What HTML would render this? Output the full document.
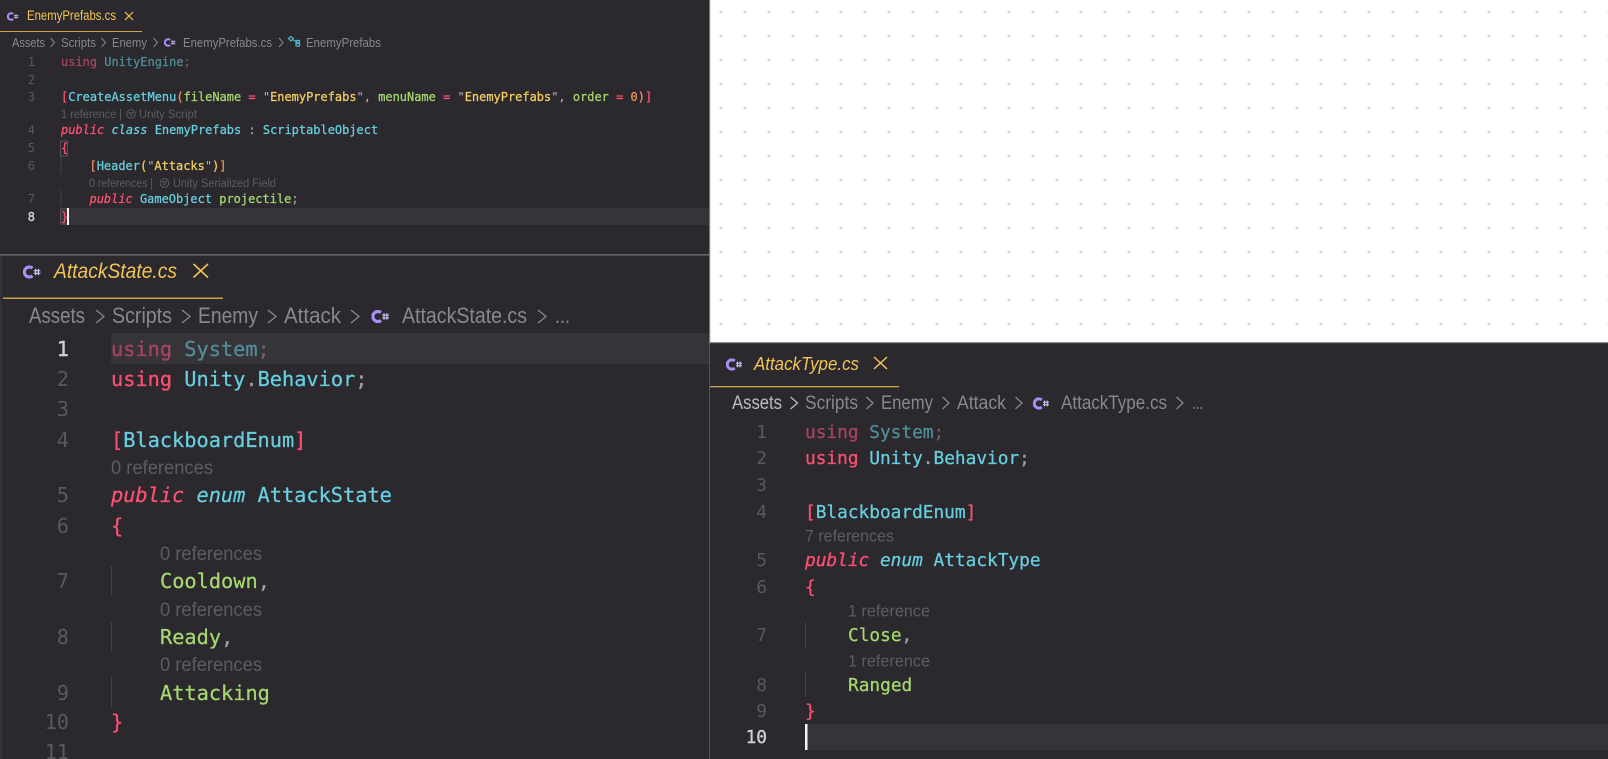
<!DOCTYPE html>
<html><head><meta charset="utf-8"><style>
html,body{margin:0;padding:0;background:#2b292d;overflow:hidden;width:1608px;height:759px}
svg{display:block}
text{white-space:pre}
.m{font-family:"DejaVu Sans Mono","Liberation Mono",monospace}
.u{font-family:"Liberation Sans",sans-serif}
.s1{font-size:11.97px}.s2{font-size:20.3px}.s3{font-size:17.8px}
.n{fill:#5b595c}.nb{fill:#d0ced0;stroke:#d0ced0;stroke-width:.4}
.k{fill:#fc4f72;stroke:#fc4f72;stroke-width:.3}.c{fill:#66cfe0;stroke:#66cfe0;stroke-width:.25}.g{fill:#a5d96f;stroke:#a5d96f;stroke-width:.25}.y{fill:#f3cf60;stroke:#f3cf60;stroke-width:.25}.o{fill:#f0915f;stroke:#f0915f;stroke-width:.25}.p{fill:#a09ea2;stroke:#a09ea2;stroke-width:.25}.w{fill:#b9b7ba}
.kd{fill:#a8455f;stroke:#a8455f;stroke-width:.25}.cd{fill:#4f8f99;stroke:#4f8f99;stroke-width:.25}.pd{fill:#6c6a6d}
.i{font-style:italic}
.cl{fill:#5e5c60}.bc{fill:#8a888b}.bb{fill:#bdbbbd}.tab{fill:#f1c453}
.top{filter:blur(.35px)}
</style></head><body>
<svg xmlns="http://www.w3.org/2000/svg" width="1608" height="759" viewBox="0 0 1608 759">
<defs>
<pattern id="d" x="710" y="0" width="24" height="24" patternUnits="userSpaceOnUse">
<rect x="9" y="10" width="4" height="4" fill="#f2f4f8"/><rect x="10" y="11" width="2" height="2" fill="#ccd1dd"/>
</pattern>
<symbol id="cs" viewBox="0 0 18 14">
<path d="M9.300 3.200A4.900 4.900 0 1 0 9.300 10.800" fill="none" stroke="#a68ff5" stroke-width="3.100"/>
<path d="M12.200 3.800V10.200M15 3.800V10.200M10.500 5.700H17M10.500 8.300H17" fill="none" stroke="#c7bff0" stroke-width="1.200"/>
</symbol>
</defs>
<rect width="1608" height="759" fill="#2b292d"/>
<rect x="710" y="0" width="898" height="342" fill="#fff"/>
<rect x="710" y="0" width="898" height="342" fill="url(#d)"/>
<rect x="709" y="0" width="1.2" height="343" fill="#7a787b"/>
<rect x="709" y="343" width="1" height="416" fill="#555356"/>
<rect x="709" y="342" width="899" height="1.2" fill="#8a888b"/>
<rect x="0" y="254" width="709" height="1.6" fill="#666467"/>
<rect x="0" y="256" width="2" height="503" fill="#343236"/>

<!-- TOP PANEL -->
<g class="top">
<use href="#cs" x="7" y="11.500" width="12" height="10"/>
<text class="u tab" x="27" y="20" font-size="13.500" textLength="89" lengthAdjust="spacingAndGlyphs">EnemyPrefabs.cs</text>
<path d="M125 12L133 20M133 12L125 20" stroke="#e8c25a" stroke-width="1.2" fill="none"/>
<rect x="0" y="31" width="142" height="1" fill="#c9a54c"/>
<g class="u bc" font-size="13">
<text x="12" y="47" textLength="33" lengthAdjust="spacingAndGlyphs">Assets</text>
<text x="61" y="47" textLength="35" lengthAdjust="spacingAndGlyphs">Scripts</text>
<text x="112" y="47" textLength="35" lengthAdjust="spacingAndGlyphs">Enemy</text>
<text x="183" y="47" textLength="89" lengthAdjust="spacingAndGlyphs">EnemyPrefabs.cs</text>
<text x="306" y="47" textLength="75" lengthAdjust="spacingAndGlyphs">EnemyPrefabs</text>
</g>
<path d="M50.500 38L54.500 42.500L50.500 47M101.500 38L105.500 42.500L101.500 47M153.500 38L157.500 42.500L153.500 47M279 38L283 42.500L279 47" fill="none" stroke="#8a888b"/>
<use href="#cs" x="164" y="37.500" width="12" height="10"/>
<path d="M288.500 38.500L291 36.500L293.500 38.500L291 41ZM293 40L297.500 42M296 40.500H299.500V43H296ZM296 43.500H299.500V46H296Z" fill="none" stroke="#4fb6cc" stroke-width="1.200"/>

<g class="m s1">
<rect x="61" y="208" width="648" height="17" fill="#363438"/>
<rect x="60.500" y="155" width="1" height="19" fill="#444246"/>
<rect x="60.500" y="190" width="1" height="16" fill="#444246"/>
<rect x="60.500" y="141" width="7" height="15" fill="none" stroke="#555356"/>
<rect x="60.500" y="209" width="7" height="15" fill="none" stroke="#555356"/>
<rect x="67" y="208" width="2" height="17" fill="#f4f4f4"/>
<g class="n" text-anchor="end">
<text x="35" y="66">1</text><text x="35" y="84">2</text><text x="35" y="101">3</text><text x="35" y="134">4</text><text x="35" y="152">5</text><text x="35" y="170">6</text><text x="35" y="203">7</text><text x="35" y="221" class="nb">8</text>
</g>
<text x="61" y="66"><tspan class="kd">using</tspan> <tspan class="cd">UnityEngine</tspan><tspan class="pd">;</tspan></text>
<text x="61" y="101"><tspan class="k">[</tspan><tspan class="c">CreateAssetMenu</tspan><tspan class="o">(</tspan><tspan class="g">fileName</tspan> <tspan class="k">=</tspan> <tspan class="w">"</tspan><tspan class="y">EnemyPrefabs</tspan><tspan class="w">",</tspan> <tspan class="g">menuName</tspan> <tspan class="k">=</tspan> <tspan class="w">"</tspan><tspan class="y">EnemyPrefabs</tspan><tspan class="w">",</tspan> <tspan class="g">order</tspan> <tspan class="k">=</tspan> <tspan class="o">0)</tspan><tspan class="k">]</tspan></text>
<text x="61" y="134"><tspan class="k i">public</tspan> <tspan class="c i">class</tspan> <tspan class="c">EnemyPrefabs</tspan> <tspan class="p">:</tspan> <tspan class="c">ScriptableObject</tspan></text>
<text x="61" y="152" class="k">{</text>
<text x="89.500" y="170"><tspan class="o">[</tspan><tspan class="c">Header</tspan><tspan class="y">(</tspan><tspan class="w">"</tspan><tspan class="y">Attacks</tspan><tspan class="w">"</tspan><tspan class="y">)</tspan><tspan class="o">]</tspan></text>
<text x="89.500" y="203"><tspan class="k i">public</tspan> <tspan class="c">GameObject</tspan> <tspan class="g">projectile</tspan><tspan class="p">;</tspan></text>
<text x="61" y="221" class="k">}</text>
</g>
<g class="u cl" font-size="11.500">
<text x="61" y="118" textLength="61" lengthAdjust="spacingAndGlyphs">1 reference |</text>
<text x="139" y="118" textLength="58" lengthAdjust="spacingAndGlyphs">Unity Script</text>
<text x="89" y="187" textLength="64" lengthAdjust="spacingAndGlyphs">0 references |</text>
<text x="173" y="187" textLength="103" lengthAdjust="spacingAndGlyphs">Unity Serialized Field</text>
</g>
<circle cx="131" cy="114" r="4.300" fill="none" stroke="#5e5c60"/>
<path d="M128.800 112.500L133.200 112.500L131 116Z" fill="none" stroke="#5e5c60" stroke-width=".8"/>
<circle cx="164.500" cy="183" r="4.300" fill="none" stroke="#5e5c60"/>
<path d="M162.300 181.500L166.700 181.500L164.500 185Z" fill="none" stroke="#5e5c60" stroke-width=".8"/>
</g>

<!-- BOTTOM LEFT PANEL -->
<use href="#cs" x="23" y="264.500" width="18.500" height="15"/>
<text class="u tab i" x="54" y="278" font-size="21.500" textLength="123" lengthAdjust="spacingAndGlyphs">AttackState.cs</text>
<path d="M193.500 264L208 277.500M208 264L193.500 277.500" stroke="#f1c453" stroke-width="1.600" fill="none"/>
<rect x="3" y="297.500" width="220" height="1.500" fill="#c9a54c"/>
<g class="u bc" font-size="22">
<text x="29" y="323" textLength="56" lengthAdjust="spacingAndGlyphs">Assets</text>
<text x="112" y="323" textLength="60" lengthAdjust="spacingAndGlyphs">Scripts</text>
<text x="198" y="323" textLength="60" lengthAdjust="spacingAndGlyphs">Enemy</text>
<text x="284" y="323" textLength="57" lengthAdjust="spacingAndGlyphs">Attack</text>
<text x="402" y="323" textLength="125" lengthAdjust="spacingAndGlyphs">AttackState.cs</text>
<text x="555" y="323" textLength="15" lengthAdjust="spacingAndGlyphs">...</text>
</g>
<path d="M96 310L104 316.500L96 323M182 310L190 316.500L182 323M268 310L276 316.500L268 323M351 310L359 316.500L351 323M538 310L546 316.500L538 323" fill="none" stroke="#8a888b" stroke-width="1.300"/>
<use href="#cs" x="371.500" y="309" width="18.500" height="15"/>

<g class="m s2">
<rect x="111" y="333" width="598" height="31" fill="#363438"/>
<rect x="111" y="566" width="1" height="30" fill="#444246"/>
<rect x="111" y="622" width="1" height="29" fill="#444246"/>
<rect x="111" y="677" width="1" height="30" fill="#444246"/>
<g class="n" text-anchor="end">
<text x="69" y="356" class="nb">1</text><text x="69" y="386">2</text><text x="69" y="416">3</text><text x="69" y="447">4</text><text x="69" y="502">5</text><text x="69" y="533">6</text><text x="69" y="588">7</text><text x="69" y="644">8</text><text x="69" y="700">9</text><text x="69" y="729">10</text><text x="69" y="759">11</text>
</g>
<text x="111" y="356"><tspan class="kd">using</tspan> <tspan class="cd">System</tspan><tspan class="pd">;</tspan></text>
<text x="111" y="386"><tspan class="k">using</tspan> <tspan class="c">Unity</tspan><tspan class="p">.</tspan><tspan class="c">Behavior</tspan><tspan class="p">;</tspan></text>
<text x="111" y="447"><tspan class="k">[</tspan><tspan class="c">BlackboardEnum</tspan><tspan class="k">]</tspan></text>
<text x="111" y="502"><tspan class="k i">public</tspan> <tspan class="c i">enum</tspan> <tspan class="c">AttackState</tspan></text>
<text x="111" y="533" class="k">{</text>
<text x="160" y="588"><tspan class="g">Cooldown</tspan><tspan class="p">,</tspan></text>
<text x="160" y="644"><tspan class="g">Ready</tspan><tspan class="p">,</tspan></text>
<text x="160" y="700" class="g">Attacking</text>
<text x="111" y="729" class="k">}</text>
</g>
<g class="u cl" font-size="19">
<text x="111" y="474" textLength="102" lengthAdjust="spacingAndGlyphs">0 references</text>
<text x="160" y="560" textLength="102" lengthAdjust="spacingAndGlyphs">0 references</text>
<text x="160" y="616" textLength="102" lengthAdjust="spacingAndGlyphs">0 references</text>
<text x="160" y="671" textLength="102" lengthAdjust="spacingAndGlyphs">0 references</text>
</g>

<!-- BOTTOM RIGHT PANEL -->
<use href="#cs" x="726" y="357.500" width="17" height="14"/>
<text class="u tab i" x="754" y="370" font-size="18.500" textLength="105" lengthAdjust="spacingAndGlyphs">AttackType.cs</text>
<path d="M874 357L887 369M887 357L874 369" stroke="#f1c453" stroke-width="1.500" fill="none"/>
<rect x="710" y="386" width="189" height="1.300" fill="#c9a54c"/>
<g class="u bc" font-size="19">
<text x="732" y="409" textLength="50" lengthAdjust="spacingAndGlyphs" class="bb">Assets</text>
<text x="805" y="409" textLength="53" lengthAdjust="spacingAndGlyphs">Scripts</text>
<text x="881" y="409" textLength="52" lengthAdjust="spacingAndGlyphs">Enemy</text>
<text x="957" y="409" textLength="49" lengthAdjust="spacingAndGlyphs">Attack</text>
<text x="1061" y="409" textLength="106" lengthAdjust="spacingAndGlyphs">AttackType.cs</text>
<text x="1192" y="409" textLength="11" lengthAdjust="spacingAndGlyphs">...</text>
</g>
<path d="M790.500 397L797.500 403L790.500 409" fill="none" stroke="#bdbbbd" stroke-width="1.300"/>
<path d="M866.500 397L873 403L866.500 409M942.500 397L949 403L942.500 409M1015.500 397L1022 403L1015.500 409M1176.500 397L1183 403L1176.500 409" fill="none" stroke="#8a888b" stroke-width="1.300"/>
<use href="#cs" x="1033" y="396.500" width="17" height="14"/>

<g class="m s3">
<rect x="805" y="724" width="803" height="26" fill="#363438"/>
<rect x="805" y="622" width="1" height="27" fill="#444246"/>
<rect x="805" y="671" width="1" height="26" fill="#444246"/>
<rect x="805" y="724" width="2.500" height="26" fill="#f4f4f4"/>
<g class="n" text-anchor="end">
<text x="767" y="438">1</text><text x="767" y="464">2</text><text x="767" y="491">3</text><text x="767" y="518">4</text><text x="767" y="566">5</text><text x="767" y="593">6</text><text x="767" y="641">7</text><text x="767" y="691">8</text><text x="767" y="717">9</text><text x="767" y="743" class="nb">10</text>
</g>
<text x="805" y="438"><tspan class="kd">using</tspan> <tspan class="cd">System</tspan><tspan class="pd">;</tspan></text>
<text x="805" y="464"><tspan class="k">using</tspan> <tspan class="c">Unity</tspan><tspan class="p">.</tspan><tspan class="c">Behavior</tspan><tspan class="p">;</tspan></text>
<text x="805" y="518"><tspan class="k">[</tspan><tspan class="c">BlackboardEnum</tspan><tspan class="k">]</tspan></text>
<text x="805" y="566"><tspan class="k i">public</tspan> <tspan class="c i">enum</tspan> <tspan class="c">AttackType</tspan></text>
<text x="805" y="593" class="k">{</text>
<text x="848" y="641"><tspan class="g">Close</tspan><tspan class="p">,</tspan></text>
<text x="848" y="691" class="g">Ranged</text>
<text x="805" y="717" class="k">}</text>
</g>
<g class="u cl" font-size="16.500">
<text x="805" y="541.500" textLength="89" lengthAdjust="spacingAndGlyphs">7 references</text>
<text x="848" y="616.500" textLength="82" lengthAdjust="spacingAndGlyphs">1 reference</text>
<text x="848" y="666.500" textLength="82" lengthAdjust="spacingAndGlyphs">1 reference</text>
</g>
</svg>
</body></html>
